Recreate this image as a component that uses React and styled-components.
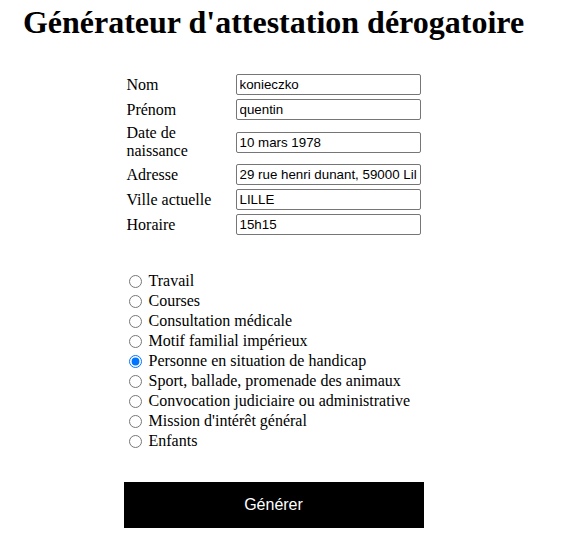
import React from "react";
import styled, { createGlobalStyle } from "styled-components";

const fields = [
  { label: "Nom", value: "konieczko" },
  { label: "Prénom", value: "quentin" },
  { label: "Date de naissance", value: "10 mars 1978" },
  { label: "Adresse", value: "29 rue henri dunant, 59000 Lille" },
  { label: "Ville actuelle", value: "LILLE" },
  { label: "Horaire", value: "15h15" },
];

const motifs = [
  "Travail",
  "Courses",
  "Consultation médicale",
  "Motif familial impérieux",
  "Personne en situation de handicap",
  "Sport, ballade, promenade des animaux",
  "Convocation judiciaire ou administrative",
  "Mission d'intérêt général",
  "Enfants",
];

const App = () => {
  return (
    <Page>
      <GlobalStyle />
      <Title>Générateur d'attestation dérogatoire</Title>
      <Form>
        <Table>
          <tbody>
            {fields.map((f) => (
              <tr key={f.label}>
                <LabelCell>{f.label}</LabelCell>
                <InputCell>
                  <Input type="text" defaultValue={f.value} />
                </InputCell>
              </tr>
            ))}
          </tbody>
        </Table>
        <Radios>
          {motifs.map((m) => (
            <RadioRow key={m}>
              <Radio
                type="radio"
                name="motif"
                defaultChecked={m === "Personne en situation de handicap"}
              />
              {m}
            </RadioRow>
          ))}
        </Radios>
        <Button>Générer</Button>
      </Form>
    </Page>
  );
};

export default App;

const GlobalStyle = createGlobalStyle`
  body {
    margin: 0;
    background: #fff;
    font-family: "Liberation Serif", serif;
  }
`;

const Page = styled.div`
  width: 547px;
  display: flex;
  flex-direction: column;
  align-items: center;
  padding-top: 4px;
`;

const Title = styled.h1`
  margin: 0;
  font-size: 32px;
  font-weight: bold;
  font-family: "Liberation Serif", serif;
  color: #000;
`;

const Form = styled.div`
  width: 300px;
  margin-top: 30px;
  display: flex;
  flex-direction: column;
`;

const Table = styled.table`
  width: 300px;
  border-spacing: 2px;
  font-size: 16px;
`;

const LabelCell = styled.td`
  width: 105px;
  padding: 1px;
  vertical-align: middle;
  line-height: 18px;
`;

const InputCell = styled.td`
  padding: 1px;
  vertical-align: middle;
`;

const Input = styled.input`
  box-sizing: border-box;
  width: 185px;
  height: 21px;
  padding: 1px 3px;
  border: 1px solid #767676;
  border-radius: 2px;
  font-family: "Liberation Sans", Arial, sans-serif;
  font-size: 13.33px;
  color: #000;
  display: block;
`;

const Radios = styled.div`
  margin-top: 33px;
  display: flex;
  flex-direction: column;
`;

const RadioRow = styled.label`
  height: 20px;
  display: flex;
  align-items: center;
  font-size: 16px;
  color: #000;
`;

const Radio = styled.input`
  width: 13px;
  height: 13px;
  margin: 0 7px 0 5px;
`;

const Button = styled.button`
  margin-top: 31px;
  width: 300px;
  height: 46px;
  background: #000;
  color: #fff;
  border: 0;
  font-family: "Liberation Sans", Arial, sans-serif;
  font-size: 16px;
  cursor: pointer;
`;
